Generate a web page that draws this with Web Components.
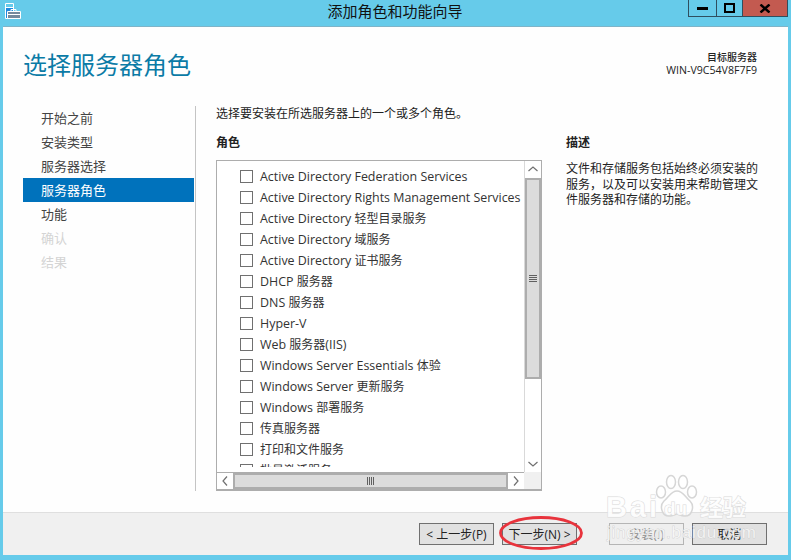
<!DOCTYPE html>
<html lang="zh">
<head>
<meta charset="utf-8">
<title>添加角色和功能向导</title>
<style>
  html, body { margin: 0; height: 100%; overflow: hidden; background: #66cbea; }
  body { font-family: "Open Sans", "Noto Sans CJK SC", sans-serif; color: #222; }
</style>
</head>
<body>
<wizard-window>
  <title-bar slot="bar" heading="添加角色和功能向导"></title-bar>
  <page-header slot="head" heading="选择服务器角色" label="目标服务器" server="WIN-V9C54V8F7F9"></page-header>
  <wizard-nav slot="nav" items='[["开始之前",""],["安装类型",""],["服务器选择",""],["服务器角色","active"],["功能",""],["确认","off"],["结果","off"]]'></wizard-nav>
  <role-panel slot="main"></role-panel>
  <wizard-footer slot="foot"></wizard-footer>
</wizard-window>
<baidu-mark></baidu-mark>

<script>
class WizardWindow extends HTMLElement {
  constructor() {
    super();
    this.attachShadow({ mode: 'open' });
  }
  connectedCallback() {
    this.shadowRoot.innerHTML = `
      <style>
        :host { display: flex; flex-direction: column; width: 791px; height: 560px; background: #66cbea; }
        .client { flex: 1; margin: 0 3px 5px; background: #fefefe; display: flex; flex-direction: column; box-shadow: 0 -1px 0 #7fb4c8; min-height: 0; }
        .body { flex: 1; display: flex; padding: 0 0 21px 20px; min-height: 0; }
      </style>
      <slot name="bar"></slot>
      <div class="client">
        <slot name="head"></slot>
        <div class="body">
          <slot name="nav"></slot>
          <slot name="main"></slot>
        </div>
        <slot name="foot"></slot>
      </div>
    `;
  }
}

class TitleBar extends HTMLElement {
  constructor() {
    super();
    this.attachShadow({ mode: 'open' });
  }
  connectedCallback() {
    this.shadowRoot.innerHTML = `
      <style>
        :host { display: flex; height: 27px; flex: none; position: relative; }
        svg.app { margin: 3px 0 0 5px; width: 17px; height: 17px; flex: none; }
        .text { position: absolute; left: 0; right: 1px; top: 1px; text-align: center; font-size: 15px; line-height: 20px; color: #111; }
        .ctrl { margin-left: auto; margin-right: 3px; display: flex; height: 17px; border: 1px solid #2f4f5f; border-top: 0; box-sizing: border-box; position: relative; }
        .ctrl div { display: flex; align-items: center; justify-content: center; box-sizing: border-box; }
        .min { width: 28px; border-right: 1px solid #2f4f5f; }
        .max { width: 26px; border-right: 1px solid #2f4f5f; }
        .close { width: 44px; background: #c35a50; }
      </style>
      <svg class="app" viewBox="0 0 17 17">
        <path d="M0.5 0.5h8v15h-8z" fill="#1f8ae0" stroke="#fff"/>
        <rect x="1" y="1" width="7" height="3" fill="#66cbea"/>
        <path d="M1 4.5h7" stroke="#fff"/>
        <path d="M6 8V6.5h5V8" fill="none" stroke="#fff"/>
        <path d="M2.5 8.5h13v7h-13z" fill="#75899c" stroke="#fff"/>
        <path d="M3 11.5h12" stroke="#fff"/>
      </svg>
      <div class="text">${this.getAttribute('heading')}</div>
      <div class="ctrl">
        <div class="min"><svg width="11" height="5" viewBox="0 0 11 5"><rect y="1" width="11" height="3" fill="#000"/></svg></div>
        <div class="max"><svg width="11" height="10" viewBox="0 0 11 10"><path d="M1 1h9v8H1z" fill="none" stroke="#000" stroke-width="2"/></svg></div>
        <div class="close"><svg width="12" height="9" viewBox="0 0 12 9"><path d="M1.5 0.5l9 8M10.5 0.5l-9 8" stroke="#000" stroke-width="2.4" fill="none"/></svg></div>
      </div>
    `;
  }
}

class PageHeader extends HTMLElement {
  constructor() {
    super();
    this.attachShadow({ mode: 'open' });
  }
  connectedCallback() {
    this.shadowRoot.innerHTML = `
      <style>
        :host { display: flex; height: 79px; flex: none; justify-content: space-between; padding: 0 31px 0 20px; box-sizing: border-box; }
        h1 { margin: 22px 0 0; font-size: 24px; font-weight: 400; line-height: 32px; color: #0b7ba6; }
        .target { margin-top: 24px; text-align: right; font-size: 10.6px; line-height: 13px; color: #222; }
        .target b { display: block; font-size: 10px; font-weight: 500; }
      </style>
      <h1>${this.getAttribute('heading')}</h1>
      <div class="target"><b>${this.getAttribute('label')}</b>${this.getAttribute('server')}</div>
    `;
  }
}

class WizardNav extends HTMLElement {
  constructor() {
    super();
    this.attachShadow({ mode: 'open' });
  }
  connectedCallback() {
    const items = JSON.parse(this.getAttribute('items') || '[]');
    this.shadowRoot.innerHTML = `
      <style>
        :host { display: block; flex: none; width: 172px; border-right: 1px solid #c4c4c4; }
        div { width: 171px; height: 24px; line-height: 24px; padding-left: 18px; box-sizing: border-box; font-size: 13px; color: #444; }
        .active { background: #0072bc; color: #fff; }
        .off { color: #d4d4d4; }
      </style>
      ${items.map(i => `<div class="${i[1]}">${i[0]}</div>`).join('')}
    `;
  }
}

class RolePanel extends HTMLElement {
  constructor() {
    super();
    this.attachShadow({ mode: 'open' });
  }
  connectedCallback() {
    const roles = [
      'Active Directory Federation Services',
      'Active Directory Rights Management Services',
      'Active Directory 轻型目录服务',
      'Active Directory 域服务',
      'Active Directory 证书服务',
      'DHCP 服务器',
      'DNS 服务器',
      'Hyper-V',
      'Web 服务器(IIS)',
      'Windows Server Essentials 体验',
      'Windows Server 更新服务',
      'Windows 部署服务',
      '传真服务器',
      '打印和文件服务',
      '批量激活服务'
    ];
    this.shadowRoot.innerHTML = `
      <style>
        :host { display: grid; flex: 1; grid-template-columns: 326px 1fr; column-gap: 24px; padding-left: 20px; font-size: 12px; color: #222; align-content: start; }
        .intro { grid-column: 1 / 3; height: 28px; line-height: 14px; margin-top: 1px; }
        h2 { margin: 0; font-size: 12px; font-weight: 700; line-height: 16px; height: 25px; }
        .desc p { margin: 0; width: 196px; line-height: 15.5px; margin-top: 1px; font-size: 12px; }
        .box { height: 331px; border: 2px solid #adadad; border-width: 1px 1px 2px 1px; box-sizing: border-box; display: grid; grid-template-columns: minmax(0, 1fr) 17px; grid-template-rows: minmax(0, 1fr) 17px; background: #fff; }
        .rows { overflow: hidden; padding-top: 5px; margin-bottom: 5px; }
        .corner { background: #f0f0f0; }
      </style>
      <div class="intro">选择要安装在所选服务器上的一个或多个角色。</div>
      <div>
        <h2>角色</h2>
        <div class="box">
          <div class="rows">${roles.map(r => `<role-row label="${r}"></role-row>`).join('')}</div>
          <scroll-bar dir="v"></scroll-bar>
          <scroll-bar dir="h"></scroll-bar>
          <div class="corner"></div>
        </div>
      </div>
      <div class="desc">
        <h2>描述</h2>
        <p>文件和存储服务包括始终必须安装的服务，以及可以安装用来帮助管理文件服务器和存储的功能。</p>
      </div>
    `;
  }
}

class RoleRow extends HTMLElement {
  constructor() {
    super();
    this.attachShadow({ mode: 'open' });
  }
  connectedCallback() {
    // the latin part runs a little bigger than the chinese part in the original
    const text = this.getAttribute('label');
    const label = text.replace(/[\u4e00-\u9fff]+/g, m => `<span>${m}</span>`);
    this.shadowRoot.innerHTML = `
      <style>
        :host { display: flex; align-items: center; height: 21px; padding-left: 23px; font-size: 12.45px; white-space: nowrap; color: #333; }
        i { width: 13px; height: 13px; border: 1px solid #707070; box-sizing: border-box; background: #fff; margin-right: 7px; flex: none; }
        span { font-size: 12px; }
        .mixed { padding-bottom: 2px; }
      </style>
      <i></i><div class="${label === text ? '' : 'mixed'}">${label}</div>
    `;
  }
}

class ScrollBar extends HTMLElement {
  constructor() {
    super();
    this.attachShadow({ mode: 'open' });
  }
  connectedCallback() {
    const v = this.getAttribute('dir') === 'v';
    const arrow = d => `<svg class="arrow" width="16" height="16" viewBox="0 0 16 16"><path d="${d}" fill="none" stroke="#707070" stroke-width="1.2"/></svg>`;
    const grip = v
      ? '<svg width="8" height="8" viewBox="0 0 8 8"><path d="M0 0.5h8M0 2.5h8M0 4.5h8M0 6.5h8" stroke="#606060"/></svg>'
      : '<svg width="8" height="8" viewBox="0 0 8 8"><path d="M0.5 0v8M2.5 0v8M4.5 0v8M6.5 0v8" stroke="#606060"/></svg>';
    this.shadowRoot.innerHTML = `
      <style>
        :host { display: flex; background: #fff; flex-direction: ${v ? 'column' : 'row'}; ${v ? 'border-left: 1px solid #d9d9d9;' : 'border-top: 1px solid #adadad;'} box-sizing: border-box; min-width: 0; min-height: 0; }
        .arrow { flex: none; }
        .thumb { background: #dcdcdc; border: 2px solid #adadad; box-sizing: border-box; display: flex; align-items: center; justify-content: center; }
        .v { height: 201px; flex: none; margin-top: 1px; }
        .h { flex: 1; }
        .track { flex: 1; }
      </style>
      ${v
        ? `${arrow('M3.5 10l4.5-4 4.5 4')}<div class="thumb v">${grip}</div><div class="track"></div>${arrow('M3.5 6l4.5 4 4.5-4')}`
        : `${arrow('M10 3.5l-4 4.5 4 4.5')}<div class="thumb h">${grip}</div>${arrow('M6 3.5l4 4.5-4 4.5')}`}
    `;
  }
}

class WizardFooter extends HTMLElement {
  constructor() {
    super();
    this.attachShadow({ mode: 'open' });
  }
  connectedCallback() {
    this.shadowRoot.innerHTML = `
      <style>
        :host { display: flex; flex: none; height: 43px; box-sizing: border-box; background: #f0f0f0; border-top: 1px solid #dfdfdf; padding: 10px 21px 0 416px; align-items: flex-start; }
        .gap { width: 32px; }
        wizard-button + wizard-button { margin-left: 8px; }
        .gap + wizard-button { margin-left: 0; }
      </style>
      <wizard-button>&lt; 上一步(P)</wizard-button>
      <wizard-button>下一步(N) &gt;</wizard-button>
      <div class="gap"></div>
      <wizard-button disabled>安装(I)</wizard-button>
      <wizard-button>取消</wizard-button>
    `;
  }
}

class WizardButton extends HTMLElement {
  constructor() {
    super();
    this.attachShadow({ mode: 'open' });
    this.shadowRoot.innerHTML = `
      <style>
        :host { display: flex; align-items: center; justify-content: center; width: 75px; height: 22px; box-sizing: border-box; border: 1px solid #707070; background: #e1e1e1; font-size: 12px; color: #222; white-space: nowrap; }
        :host([disabled]) { border-color: #b5b5b5; background: #efefef; color: #8c8c8c; }
      </style>
      <slot></slot>
    `;
  }
}

class BaiduMark extends HTMLElement {
  constructor() {
    super();
    this.attachShadow({ mode: 'open' });
    this.shadowRoot.innerHTML = `
      <style>
        :host { display: block; position: absolute; left: 0; top: 0; width: 791px; height: 560px; pointer-events: none; font-family: "Liberation Sans", "Noto Sans CJK SC", sans-serif; }
        .ring { position: absolute; left: 498px; top: 515px; }
        .paw { position: absolute; left: 652px; top: 474px; }
        span { position: absolute; color: rgba(255,255,255,.85); -webkit-text-stroke: 1px #dadada; paint-order: stroke fill; white-space: nowrap; }
        .bai { left: 606px; top: 491px; font-size: 29px; font-weight: 700; line-height: 32px; letter-spacing: 3px; }
        .du { left: 664px; top: 497px; font-size: 19px; font-weight: 700; line-height: 24px; }
        .jy { left: 700px; top: 493px; font-size: 23px; font-weight: 700; line-height: 30px; }
        .url { left: 607px; top: 523px; font-size: 17px; line-height: 20px; letter-spacing: .75px; color: rgba(255,255,255,.7); -webkit-text-stroke: .5px #c4c4c4; }
      </style>
      <svg class="paw" width="48" height="46" viewBox="0 0 48 46">
        <g fill="rgba(255,255,255,.7)" stroke="#d6d6d6" stroke-width="1.5">
          <ellipse cx="9" cy="18" rx="4.5" ry="6"/>
          <ellipse cx="19" cy="8" rx="4.5" ry="6.5"/>
          <ellipse cx="31" cy="8" rx="4.5" ry="6.5"/>
          <ellipse cx="40" cy="18" rx="4.5" ry="6"/>
          <path d="M25 17c6 0 8 6 13 10 5 5 2 16-6 15-3 0-5-2-7-2s-4 2-7 2c-8 1-11-10-6-15 5-4 7-10 13-10z"/>
        </g>
      </svg>
      <span class="bai">Bai</span><span class="du">du</span><span class="jy">经验</span>
      <span class="url">jingyan.baidu.com</span>
      <svg class="ring" width="86" height="36" viewBox="0 0 86 36">
        <ellipse cx="43" cy="18" rx="40.5" ry="15.5" fill="none" stroke="#e8333c" stroke-width="2.8"/>
      </svg>
    `;
  }
}

customElements.define('wizard-window', WizardWindow);
customElements.define('title-bar', TitleBar);
customElements.define('page-header', PageHeader);
customElements.define('wizard-nav', WizardNav);
customElements.define('role-panel', RolePanel);
customElements.define('role-row', RoleRow);
customElements.define('scroll-bar', ScrollBar);
customElements.define('wizard-footer', WizardFooter);
customElements.define('wizard-button', WizardButton);
customElements.define('baidu-mark', BaiduMark);
</script>
</body>
</html>
